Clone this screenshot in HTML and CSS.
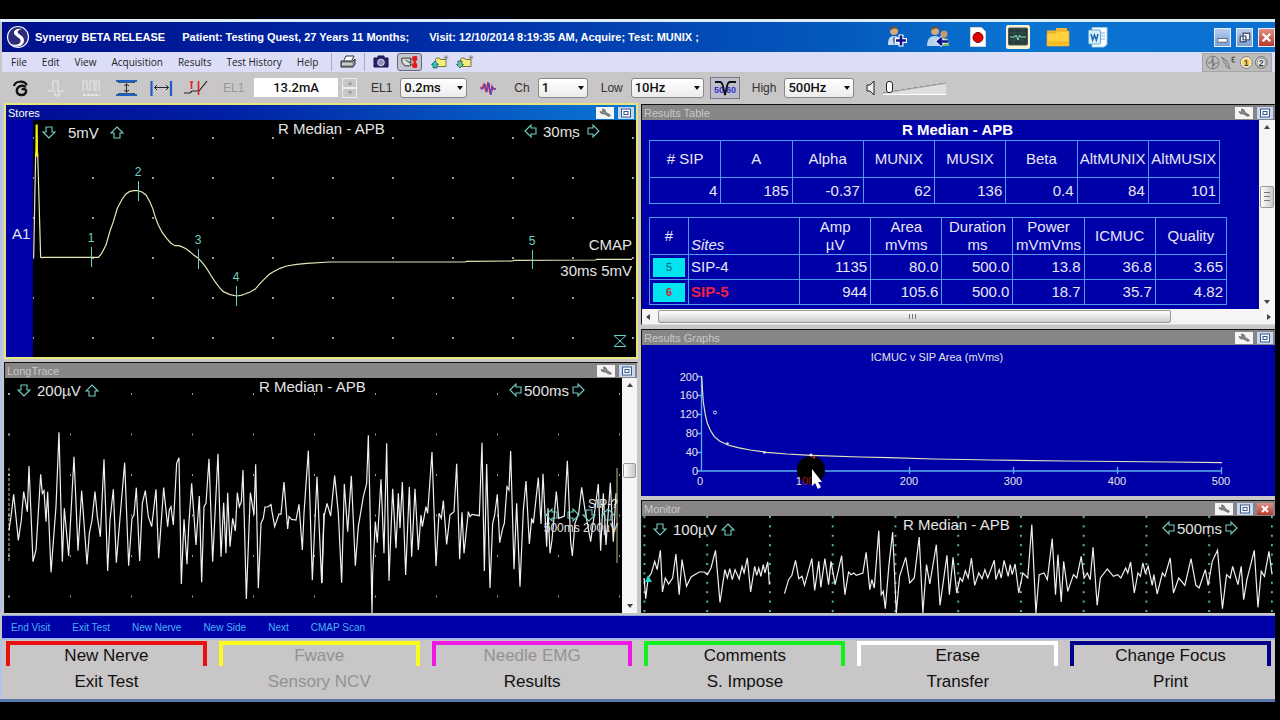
FILE: index.html
```html
<!DOCTYPE html>
<html lang="en">
<head>
<meta charset="utf-8">
<title>Synergy BETA RELEASE</title>
<link rel="stylesheet" href="styles.css">
</head>
<body>
<svg class="defs" aria-hidden="true">
  <defs>
    <symbol id="arrow" viewBox="-8 -8 16 16"><path d="M0-6 6 0H3V5H-3V0H-6Z" fill="none" stroke="#74cdc4" stroke-width="1.1"/></symbol>
    <symbol id="wrench" viewBox="0 0 18 12"><path d="M4 4.500a3 3 0 0 0 4 2.300l5 2.700 1.500-1.200L9.800 5.200A3 3 0 0 0 6.500 2l.5 2.200-1.400.8Z" fill="#888" stroke="#555" stroke-width=".7"/></symbol>
    <symbol id="maximize" viewBox="0 0 16 12"><rect x="3.500" y="2" width="9" height="8" fill="#f4f8ff" stroke="#3f5688"/><rect x="6" y="4.500" width="4" height="3" fill="#fff" stroke="#3f5688"/></symbol>
    <symbol id="folder" viewBox="0 0 18 14"><path d="M4.500 11.500V4.500l1-1.500h3l1 1.500h5.500v7Z" fill="#f4ef7c" stroke="#77733c"/><path d="M15 0v5M12.500 2.500h5M13.300.8l3.500 3.500M16.800.8l-3.500 3.500" stroke="#777" stroke-width=".6"/></symbol>
  </defs>
</svg>

<main class="app">
  <header class="titlebar">
    <svg class="logo" viewBox="0 0 24 24"><circle cx="12" cy="12" r="10.500" fill="#2b2d78" stroke="#eef" stroke-width="1.200"/><path d="M16 4C10 2.500 6 6.500 9 10c2 2.500 6 3 5.500 6.500-.4 3-5 4.500-10.500 2 5 5 13.500 3.500 14-2.500.3-4-3-5.500-5-7C10.500 7 12 4.500 16 4Z" fill="#fff"/></svg>
    <h1>Synergy BETA RELEASE</h1>
    <span class="patient">Patient: Testing Quest, 27 Years 11 Months;</span>
    <span class="visit">Visit: 12/10/2014 8:19:35 AM, Acquire; Test: MUNIX ;</span>
    <nav class="launch">
      <button aria-label="Add patient"><svg viewBox="0 0 24 24"><circle cx="8" cy="6" r="4" fill="#d8a97c"/><path d="M4 6c-1-6 9-6 8-1-2-2-5-2-8 1Z" fill="#70513a"/><path d="M2 20c0-7 2-9 6-9s7 2 7 9Z" fill="#c9dcee"/><path d="m8 11 2 3-2 6-1.500-6Z" fill="#5d83b5"/><path d="M15 9.500v12M9 15.500h12" stroke="#fff" stroke-width="5"/><path d="M15 10.500v10M10 15.500h10" stroke="#10108c" stroke-width="2.600"/></svg></button>
      <button aria-label="Patient list"><svg viewBox="0 0 24 24"><circle cx="18" cy="9" r="3.500" fill="#c9966d"/><path d="M13 21c0-6 2-8 5-8s5 2 5 8Z" fill="#7dbb66"/><circle cx="9" cy="6" r="4" fill="#d8a97c"/><path d="M5 6c-1-6 9-6 8-1-2-2-5-2-8 1Z" fill="#70513a"/><path d="M1 21c0-7 3-10 8-10s6 3 6 10Z" fill="#b5d2ee"/><path d="M22 16.500H12m4.500-4-4.500 4 4.500 4" fill="none" stroke="#fff" stroke-width="4"/><path d="M22 16.500H12m4-3.500-4 3.500 4 3.500" fill="none" stroke="#10108c" stroke-width="2.400"/></svg></button>
      <button aria-label="Record"><svg viewBox="0 0 24 24"><path d="M4.500 2.500h11l4 4v15h-15Z" fill="#fff" stroke="#d5d5d5"/><circle cx="12" cy="12.500" r="5" fill="#e00000" stroke="#700"/></svg></button>
      <button aria-label="Acquire"><svg viewBox="0 0 24 24"><rect x="0" y="0" width="24" height="24" rx="2" fill="#f7f2cf"/><rect x="2.500" y="3" width="19" height="17" rx="1" fill="#233e3a" stroke="#555"/><path d="M4 8h16M4 15h16M8 4v15M16 4v15" stroke="#3d625b" stroke-width=".6"/><path d="M4 12h5l1-2 2 5 1.500-5 1 2H20" fill="none" stroke="#8fe0c5"/></svg></button>
      <button aria-label="Open folder"><svg viewBox="0 0 24 24"><path d="M1 9V5.500h9V3h11v6Z" fill="#f3b52d"/><path d="M1 21V8h9l2-2h11v15Z" fill="#ffd13c" stroke="#e7a51c" stroke-width=".7"/><path d="M2 18h20" stroke="#f6b520" stroke-width="3"/></svg></button>
      <button aria-label="Word report"><svg viewBox="0 0 24 24"><path d="M6 2.500h15v17L18 22H6Z" fill="#fff" stroke="#9cc6e6"/><path d="M15 8h4M15 11h4M15 14h4" stroke="#7eb0dc"/><rect x="2.500" y="5" width="12" height="14" rx="1" fill="#d9f0fb" stroke="#5dacdc"/><path d="m5 9 1.700 6L8.500 10l1.800 5L12 9" fill="none" stroke="#2268b5" stroke-width="1.600"/></svg></button>
    </nav>
    <div class="window-buttons">
      <button aria-label="Minimize"><svg viewBox="0 0 16 18"><rect x="3" y="10" width="10" height="4" fill="#fff" stroke="#567"/></svg></button>
      <button aria-label="Restore"><svg viewBox="0 0 16 18"><path d="M6.500 4.500h7v7h-7ZM3.500 7.500h6v6h-6Z" fill="#fff" stroke="#4a5a78" stroke-width="1.500"/></svg></button>
      <button class="close" aria-label="Close"><svg viewBox="0 0 16 18"><path d="m4 5 8 8m0-8-8 8" stroke="#fff" stroke-width="2.500"/></svg></button>
    </div>
  </header>

  <div class="menubar">
    <nav class="menus"><button>File</button><button>Edit</button><button>View</button><button>Acquisition</button><button>Results</button><button>Test History</button><button>Help</button></nav>
    <div class="menu-tools">
      <button class="ruled" aria-label="Print"><svg viewBox="0 0 18 14"><path d="M5 5 7 1h8l-2 4" fill="#fff" stroke="#333"/><path d="M2 6h12l2-2v5l-2 3H2Z" fill="#999" stroke="#222"/><path d="M3 9h10" stroke="#fff"/></svg></button>
      <button class="ruled" aria-label="Camera"><svg viewBox="0 0 18 14"><path d="M2 3h4V1h6v2h4v9H2Z" fill="#2c236c" stroke="#151045"/><circle cx="9" cy="7.500" r="3.300" fill="#8f8bc4" stroke="#ddd"/></svg></button>
      <button class="pressed" aria-label="Video"><svg viewBox="0 0 24 14"><path d="M4 3h9v8H7l-3-4ZM8 5l5 3" fill="#ddd" stroke="#333"/><path d="M13 5 18 1v12l-5-4Z" fill="#aaa" stroke="#555"/><path d="M15 1h5v4l-2 2 2 2v4h-5V9l2-2-2-2Z" fill="#f01414"/></svg></button>
      <button aria-label="Upload"><svg viewBox="0 0 18 14"><use href="#folder"/><path d="m4 6 3.500 3.500H6V13H2V9.500H.5Z" fill="#28cabb" stroke="#174848" stroke-width=".7"/></svg></button>
      <button aria-label="Download"><svg viewBox="0 0 18 14"><use href="#folder"/><path d="m4 13 3.500-3.500H6V6H2v3.500H.5Z" fill="#68c8a0" stroke="#174848" stroke-width=".7"/></svg></button>
    </div>
    <div class="tray">
      <svg viewBox="0 0 70 17"><g fill="none" stroke="#777"><circle cx="10" cy="8.500" r="6.500"/><path d="M5 9h3l2-5 1 8 2-3h3M10 2v13"/><path d="m19 3 6 4-1 1.500 3 2L26 12l2 3-5-3 1-1.500-3-2L22 7Z"/></g><path d="M33 3h-3v5h3M30 5.500h2" stroke="#444" fill="none"/><circle cx="44.500" cy="8.500" r="6" fill="#fff" stroke="#777"/><circle cx="44.500" cy="8.500" r="4.500" fill="#ffd257"/><circle cx="60" cy="8.500" r="6" fill="#ddd" stroke="#666"/><circle cx="60" cy="8.500" r="4.200" fill="#eee" stroke="#888"/><g class="tray-num"><text x="44.500" y="12">1</text><text x="60" y="12">2</text></g></svg>
    </div>
  </div>

  <div class="toolbar">
    <div class="tool-icons">
      <button aria-label="Stimulate"><svg viewBox="0 0 24 20"><path d="M5 8c1-5 10-6 13-1" fill="none" stroke="#111" stroke-width="2.200"/><path d="M17 9c-5-3-10 0-9 5 1 4 8 4 9 0 .6-3-3-4-4-2" fill="none" stroke="#111" stroke-width="2.400"/></svg></button>
      <button aria-label="Single pulse"><svg viewBox="0 0 24 20"><path d="M4 13h5V3h5v10h6M11 13v5h4v-5" fill="none" stroke="#e8e8e8" stroke-width="1.200"/></svg></button>
      <button aria-label="Pulse train"><svg viewBox="0 0 24 20"><path d="M4 13V3h4v9h3V3h4v9h2V3h3v10" fill="none" stroke="#e6e6e6" stroke-width="1.200"/><path d="M4 17h17" stroke="#e8e8e8" stroke-width="2" stroke-dasharray="3 1"/></svg></button>
      <button aria-label="Gain"><svg viewBox="0 0 24 20"><path d="M2 3h21M2 17h21" stroke="#1b5fc4" stroke-width="2.200"/><path d="M4 4.500h17M4 15.500h17" stroke="#124" stroke-width=".7"/><path d="M12.500 6v8m-2.500-6 2.500-2 2.500 2m-5 4 2.500 2 2.500-2" fill="none" stroke="#222"/></svg></button>
      <button aria-label="Sweep"><svg viewBox="0 0 24 20"><path d="M2.500 3v15M22 3v15" stroke="#1b5fc4" stroke-width="2.200"/><path d="M5.500 9.500h14M8 7 5.500 9.500 8 12m9-5 2.500 2.500L17 12" fill="none" stroke="#222"/></svg></button>
      <button aria-label="Trigger"><svg viewBox="0 0 24 20"><path d="M0 15h6l2-2h7l8-10" fill="none" stroke="#222" stroke-width="1.200"/><path d="M7.500 4v7M14.500 3v14M6 4h3" stroke="#e02020" stroke-width="1.600"/></svg></button>
    </div>
    <label class="dim" for="current">EL1</label>
    <input id="current" class="current" type="text" value="13.2mA">
    <div class="spinner"><button aria-label="Increase">▴</button><button aria-label="Decrease">▾</button></div>
    <label class="field">EL1 <span class="drop w-ms"><select><option>0.2ms</option></select></span></label>
    <button class="wave" aria-label="Waveform"><svg viewBox="0 0 18 16"><path d="M1 8h2l2-4 2 8 2-10 2 12 2-8 1 3h3" fill="none" stroke="#d21f4a" stroke-width="1.300"/><path d="M2 9h2l2-5 2 8 2-9 2 12 2-8 1 2h2" fill="none" stroke="#4848ca"/></svg></button>
    <label class="field">Ch <span class="drop w-ch"><select><option>1</option></select></span></label>
    <label class="field">Low <span class="drop w-low"><select><option>10Hz</option></select></span></label>
    <button class="notch" aria-label="Notch filter"><svg viewBox="0 0 28 20"><text x="3" y="15">50</text><text x="15" y="15">60</text><path d="M4 4h5q2 0 3 4l2 9 2-9q1-4 3-4h6" fill="none" stroke="#111" stroke-width="1.800"/></svg></button>
    <label class="field">High <span class="drop w-high"><select><option>500Hz</option></select></span></label>
    <svg class="speaker" viewBox="0 0 12 16"><path d="M2 5h3l4-4v14l-4-4H2Z" fill="#eee" stroke="#222"/></svg>
    <input class="volume" type="range" min="0" max="100" value="4" aria-label="Volume">
  </div>

  <div class="workspace">
    <div class="column">
      <section class="panel active">
        <header><h2>Stores</h2><button aria-label="Settings"><svg><use href="#wrench"/></svg></button><button class="max" aria-label="Maximize"><svg><use href="#maximize"/></svg></button></header>
        <svg class="plot" viewBox="6 120 630 237">
          <defs><pattern id="dots-a" x="32" y="137" width="60" height="40" patternUnits="userSpaceOnUse"><rect width="2" height="2" fill="#8fa09c"/></pattern></defs>
          <rect x="33" y="120" width="603" height="237" fill="url(#dots-a)"/>
          <rect x="6" y="120" width="27" height="237" fill="#0000a8"/>
          <g transform="translate(0 100) scale(.33333)" class="trace cream">
            <polyline points="122,473 132,472 295,472 305,460 318,435 330,393 340,365 352,325 368,295 378,282 388,275 400,272 414,272 426,276 438,285 448,302 458,325 466,352 475,375 487,398 500,415 512,429 525,437 535,437 545,440 558,446 570,455 582,466 593,473 607,488 620,505 632,525 645,545 658,562 670,575 690,584 710,588 723,586 735,582 750,576 765,568 780,551 795,535 808,523 820,515 840,505 860,498 890,493 920,490 990,486 1395,486 1400,484 1538,483 1541,481 1787,480 1790,478 1896,478"/>
            <polyline points="101,473 107,160 113,160 122,473"/>
            <polyline class="spike" points="108,170 109,76 111,76 112,170"/>
          </g>
          <path d="M91.500 247v20M138.500 181v20M198.500 249v20M236.500 286v20M532.500 250v19" stroke="#5fd3c5"/>
          <g class="marks"><text x="91" y="242">1</text><text x="138" y="176">2</text><text x="198" y="244">3</text><text x="236" y="281">4</text><text x="532" y="245">5</text></g>
          <use href="#arrow" x="-8" y="-8" width="16" height="16" transform="translate(49 132) rotate(180)"/>
          <use href="#arrow" x="109" y="125" width="16" height="16"/>
          <use href="#arrow" x="-8" y="-8" width="16" height="16" transform="translate(531 131) rotate(270)"/>
          <use href="#arrow" x="-8" y="-8" width="16" height="16" transform="translate(593 131) rotate(90)"/>
          <path d="M614 335.500h12l-12 11h12Z" fill="none" stroke="#5fd3c5"/>
          <text x="12" y="239">A1</text><text x="68" y="138">5mV</text><text x="278" y="134">R Median - APB</text><text x="543" y="137">30ms</text>
          <g text-anchor="end"><text x="632" y="250">CMAP</text><text x="632" y="276">30ms 5mV</text></g>
        </svg>
      </section>

      <section class="panel">
        <header><h2>LongTrace</h2><button aria-label="Settings"><svg><use href="#wrench"/></svg></button><button class="max" aria-label="Maximize"><svg><use href="#maximize"/></svg></button></header>
        <div class="scroll-row">
          <svg class="plot" viewBox="5 378 617 235">
            <defs><pattern id="dots-b" x="8" y="393" width="61" height="40.500" patternUnits="userSpaceOnUse"><rect width="2" height="2" fill="#8aa8a2"/></pattern></defs>
            <rect x="5" y="378" width="617" height="235" fill="url(#dots-b)"/>
            <path d="M9 468v94" stroke="#b9c0a0" stroke-dasharray="3 2"/><path d="M617 468v95" stroke="#b9b98a"/>
            <g class="trace" transform="translate(0 360) scale(.33333)">
              <polyline points="27,510 33,470 41,403 55,541 64,480 71,395 82,455 87,318 99,605 108,570 122,343 127,400 132,392 138,485 143,395 153,637 168,440 177,217 187,605 193,445 206,588 222,290 234,572 245,392 261,613 268,520 276,480 285,395 292,470 301,530 312,298 323,633 330,480 340,388 349,608 362,450 374,308 386,617 396,475 402,465 409,383 419,603 427,430 436,392 445,470 455,500 468,388 476,595 491,383 503,500 508,450 513,440 520,495 530,310 537,293 544,672 552,478 561,613 566,500 575,370 588,555 598,408 605,667 612,440 618,430 627,296 638,605 654,281 663,590 671,428 678,580 683,398 690,560 698,475 706,513 712,398 718,440 724,425 729,330 739,717 751,398 762,465 767,313 775,685 783,490 790,475 795,441 803,441 813,434 816,455 824,500 837,462 843,463 852,366 863,507 867,470 875,478 888,480 897,433 907,570 912,460 925,272 937,661 951,350 965,670 972,460"/>
              <polyline transform="translate(960)" points="12,460 6,668 12,470 21,430 32,468 44,347 55,460 65,668 73,372 83,515 94,347 106,617 115,500 130,410 140,370 145,226 150,440 156,759 158,640 166,485 172,548 183,358 192,580 200,250 207,662 218,386 228,565 235,400 240,505 247,366 257,645 268,380 275,590 285,386 295,570 303,465 307,500 318,440 323,460 336,276 348,618 357,460 364,475 370,422 380,553 390,465 402,455 410,311 419,598 426,457 432,580 445,455 450,470 456,463 478,467 486,248 493,633 500,312 510,684 518,490 524,465 532,403 539,548 548,505 553,490 561,380 567,390 572,273 582,628 590,430 600,680 610,450 618,363 628,552 635,475 640,490 655,353 663,492 669,341 680,560 684,445 690,580 696,540 709,395 716,475 733,468 742,302 752,545 757,588 765,490 776,460 785,382 795,450 812,545 835,372 842,572 850,400 858,555 871,368 880,545 888,400"/>
            </g>
            <use href="#arrow" x="-8" y="-8" width="16" height="16" transform="translate(24 390) rotate(180)"/>
            <use href="#arrow" x="84" y="383" width="16" height="16"/>
            <use href="#arrow" x="-8" y="-8" width="16" height="16" transform="translate(516 390) rotate(270)"/>
            <use href="#arrow" x="-8" y="-8" width="16" height="16" transform="translate(578 390) rotate(90)"/>
            <use href="#arrow" x="-8" y="-8" width="16" height="16" transform="translate(552 515) rotate(270)"/>
            <use href="#arrow" x="-8" y="-8" width="16" height="16" transform="translate(573 515) rotate(90)"/>
            <use href="#arrow" x="-8" y="-8" width="16" height="16" transform="translate(589 515) rotate(180)"/>
            <use href="#arrow" x="600" y="507" width="16" height="16"/>
            <text x="37" y="396">200µV</text><text x="259" y="392">R Median - APB</text><text x="524" y="396">500ms</text>
            <g class="overlay" text-anchor="end"><text x="618" y="508">SIP-?</text><text x="618" y="532">500ms 200µV</text></g>
          </svg>
          <div class="vscroll"><i class="up"></i><b class="thumb-long"></b><i class="down"></i></div>
        </div>
      </section>
    </div>

    <div class="column right">
      <section class="panel">
        <header><h2>Results Table</h2><button aria-label="Settings"><svg><use href="#wrench"/></svg></button><button class="max" aria-label="Maximize"><svg><use href="#maximize"/></svg></button></header>
        <div class="scroll-row">
          <div class="results">
            <h3>R Median - APB</h3>
            <table class="summary">
              <thead><tr><th># SIP</th><th>A</th><th>Alpha</th><th>MUNIX</th><th>MUSIX</th><th>Beta</th><th>AltMUNIX</th><th>AltMUSIX</th></tr></thead>
              <tbody><tr><td>4</td><td>185</td><td>-0.37</td><td>62</td><td>136</td><td>0.4</td><td>84</td><td>101</td></tr></tbody>
            </table>
            <table class="sites">
              <thead><tr><th class="num">#</th><th class="site">Sites</th><th>Amp<br>µV</th><th>Area<br>mVms</th><th>Duration<br>ms</th><th>Power<br>mVmVms</th><th>ICMUC</th><th>Quality</th></tr></thead>
              <tbody>
                <tr><td class="num"><span>5</span></td><td class="site">SIP-4</td><td>1135</td><td>80.0</td><td>500.0</td><td>13.8</td><td>36.8</td><td>3.65</td></tr>
                <tr class="current-site"><td class="num"><span>6</span></td><td class="site">SIP-5</td><td>944</td><td>105.6</td><td>500.0</td><td>18.7</td><td>35.7</td><td>4.82</td></tr>
              </tbody>
            </table>
          </div>
          <div class="vscroll"><i class="up"></i><b class="thumb-results"></b><i class="down"></i></div>
        </div>
        <div class="hscroll"><i class="left"></i><b></b><i class="right-arrow"></i></div>
      </section>

      <section class="panel">
        <header><h2>Results Graphs</h2><button aria-label="Settings"><svg><use href="#wrench"/></svg></button><button class="max" aria-label="Maximize"><svg><use href="#maximize"/></svg></button></header>
        <svg class="plot graph" viewBox="642 345 633 151">
          <path d="M701.500 376v95H1222M697 376.500h5M697 395.500h5M697 414.500h5M697 433.500h5M697 452.500h5M697 471h5M805.500 467v7M909.500 467v7M1013.500 467v7M1117.500 467v7M1221.500 467v7" fill="none" stroke="#58aef0" stroke-width="1.300"/>
          <g class="trace cream" transform="translate(640 330) scale(.40816 .33333)"><polyline points="151,138 153,180 155,215 160,255 165,280 172,300 182,320 195,333 215,345 240,353 270,360 310,367 360,372 420,376 540,381 610,383 720,387 860,390 1040,393 1300,396 1426,398"/></g>
          <circle cx="715" cy="412.500" r="1.500" fill="none" stroke="#dde"/><circle cx="727.500" cy="443.500" r="1.300" fill="#dde"/><circle cx="764.500" cy="452.500" r="1.300" fill="#dde"/>
          <g text-anchor="end"><text x="698" y="381">200</text><text x="698" y="399">160</text><text x="698" y="418">120</text><text x="698" y="437">80</text><text x="698" y="456">40</text><text x="698" y="475">0</text></g>
          <ellipse cx="811" cy="470" rx="14" ry="14" fill="#000"/>
          <g text-anchor="middle"><text x="937" y="361">ICMUC v SIP Area (mVms)</text><text x="700" y="485">0</text><text x="805" y="485">1<tspan fill="#9c1a20">00</tspan></text><text x="909" y="485">200</text><text x="1013" y="485">300</text><text x="1117" y="485">400</text><text x="1221" y="485">500</text></g>
          <circle cx="811" cy="455" r="1.500" fill="#eee"/><circle cx="814" cy="457" r="1.500" fill="#a33"/>
          <path d="M812 469v17l3-3 3 6 3-2-3-5h4Z" fill="#fff"/>
        </svg>
      </section>

      <section class="panel">
        <header><h2>Monitor</h2><button aria-label="Settings"><svg><use href="#wrench"/></svg></button><button class="max" aria-label="Maximize"><svg><use href="#maximize"/></svg></button><button class="close" aria-label="Close"><svg viewBox="0 0 16 12"><path d="m5 3 6 6m0-6-6 6" stroke="#fff" stroke-width="2"/></svg></button></header>
        <svg class="plot" viewBox="642 516 633 97">
          <defs><pattern id="dots-c" x="643.500" y="516" width="62.750" height="9.400" patternUnits="userSpaceOnUse"><rect width="1.800" height="2" fill="#62c4b6"/></pattern></defs>
          <rect x="642" y="516" width="633" height="97" fill="url(#dots-c)"/>
          <g class="trace" transform="translate(640 498) scale(.40816 .33333)">
            <polyline points="10,240 14,302 20,240 28,225 36,190 42,215 50,157 55,282 62,240 70,258 80,240 88,168 96,290 103,185 114,265 125,237 145,222 158,222 165,230 174,210 185,157 196,313 208,215 214,240 220,212 226,245 233,215 243,243 250,205 255,225 263,180 271,282 281,205 286,232 291,210 296,235 302,200 306,225 313,192 317,260"/>
            <polyline points="354,287 364,245 372,232 381,187 389,242 397,235 403,262 421,182 428,277 438,190 443,268 453,182 462,260 468,190 478,260 494,173 502,290 511,222 517,230 524,225 530,232 546,225 554,163 563,275 568,245 574,270 585,98 591,290 596,280 601,332 610,200 619,102 628,345 636,235 651,178 661,255 672,240 684,117 693,345 702,200 710,258 726,140 735,322 752,172 758,290 767,178 776,285 784,240 790,250 797,218 804,240 812,180 820,262 830,225 838,242 845,215 852,240 868,187 872,245 880,215 885,240 892,187 902,235 907,200 912,230 919,198 928,285 938,225 950,240 960,80 970,345 978,230 990,225 998,245 1010,122 1018,290 1024,170 1032,312 1038,190 1048,280 1062,230 1070,240 1081,175 1088,240 1096,225 1103,245 1110,148 1120,322 1128,240 1145,213 1160,235 1170,230 1178,240 1190,210 1195,225 1202,192 1211,285 1220,225 1226,235 1232,195 1238,225 1245,205 1255,262 1259,230 1267,288 1280,225 1286,235 1299,180 1307,285 1320,240 1335,262 1350,182 1362,262 1370,270 1385,215 1392,262 1402,190 1415,157 1427,332 1437,230 1446,240 1452,205 1465,260 1473,205 1479,305 1487,245 1505,157 1514,328 1522,220 1530,235 1541,160 1548,225"/>
          </g>
          <path d="m648 575 4 7h-7Z" fill="#20d8d0"/>
          <use href="#arrow" x="-8" y="-8" width="16" height="16" transform="translate(660 529) rotate(180)"/>
          <use href="#arrow" x="720" y="522" width="16" height="16"/>
          <use href="#arrow" x="-8" y="-8" width="16" height="16" transform="translate(1169 528) rotate(270)"/>
          <use href="#arrow" x="-8" y="-8" width="16" height="16" transform="translate(1231 528) rotate(90)"/>
          <text x="673" y="535">100µV</text><text x="903" y="530">R Median - APB</text><text x="1177" y="534">500ms</text>
        </svg>
      </section>
    </div>
  </div>

  <nav class="actions"><button>End Visit</button><button>Exit Test</button><button>New Nerve</button><button>New Side</button><button>Next</button><button>CMAP Scan</button></nav>

  <footer class="softkeys">
    <div><button class="key red">New Nerve</button><button>Exit Test</button></div>
    <div><button class="key yellow" disabled>Fwave</button><button disabled>Sensory NCV</button></div>
    <div><button class="key magenta" disabled>Needle EMG</button><button>Results</button></div>
    <div><button class="key green">Comments</button><button>S. Impose</button></div>
    <div><button class="key white">Erase</button><button>Transfer</button></div>
    <div><button class="key navy">Change Focus</button><button>Print</button></div>
  </footer>
</main>
</body>
</html>
```
FILE: styles.css
```css
* { box-sizing: border-box; }
body {
  margin: 0;
  padding: 19px 5px 18px 0;
  background: #000;
  font-family: "Liberation Sans", Arial, sans-serif;
}
button {
  margin: 0;
  padding: 0;
  border: 0;
  background: none;
  color: inherit;
  font: inherit;
}
svg { display: block; }
h1, h2, h3 { margin: 0; }
.defs { position: absolute; width: 0; height: 0; }

.app {
  background: #c8c6c6;
  border-top: 3px solid #dcecf8;
  border-bottom: 3px solid #5878a8;
}

/* Title bar */
.titlebar {
  display: flex;
  align-items: center;
  height: 30px;
  margin-left: 2px;
  padding-left: 4px;
  background: linear-gradient(90deg, #00108c, #0028a4 30%, #0458bc 65%, #0a74d2 80%, #0a70d0);
  color: #fff;
  font-size: 11px;
  font-weight: bold;
  white-space: nowrap;
}
.titlebar h1 { font-size: inherit; }
.logo { width: 24px; height: 24px; margin-right: 5px; }
.patient { margin-left: 17px; }
.visit { margin-left: 20px; }
.launch { display: flex; gap: 16px; margin-left: auto; }
.launch svg { width: 24px; height: 24px; }
.window-buttons { display: flex; gap: 5px; margin-left: 104px; }
.window-buttons button {
  width: 17px;
  border: 1px solid #e4eefc;
  background: linear-gradient(#b8cff0, #7f9fd0);
}
.window-buttons svg { width: 15px; height: 17px; }
.window-buttons .close, .panel .close { background: linear-gradient(#e09088, #b83a30); }

/* Menu bar */
.menubar {
  display: flex;
  align-items: center;
  height: 20px;
  margin-left: 2px;
  background: #dcdef8;
  color: #222;
  font: 10px "Open Sans", "Noto Sans", sans-serif;
}
.menus { display: flex; gap: 15px; padding-left: 9px; white-space: nowrap; }
.menu-tools { display: flex; align-items: center; gap: 7px; margin-left: 13px; }
.menu-tools button { height: 18px; display: flex; align-items: center; }
.menu-tools svg { width: 18px; height: 14px; }
.menu-tools .ruled { padding-left: 7px; border-left: 1px solid #aab; }
.menu-tools .pressed {
  justify-content: center;
  width: 25px;
  margin-right: 2px;
  border: 1px solid #667;
  border-radius: 3px;
  background: #c4c4d0;
}
.menu-tools .pressed svg { width: 23px; }
.tray { margin-left: auto; margin-right: 3px; background: #bdbbbb; border: 1px solid #a5a5a8; }
.tray svg { width: 68px; height: 17px; }
.tray-num { font: bold 9px "Liberation Sans", sans-serif; text-anchor: middle; fill: #444; }

/* Toolbar */
.toolbar {
  display: flex;
  align-items: center;
  height: 31px;
  padding-left: 9px;
  color: #333;
  font: 12px "Liberation Sans", Arial, sans-serif;
}
.tool-icons { display: flex; gap: 11px; margin-right: 15px; }
.tool-icons svg { width: 24px; height: 20px; }
.dim { width: 31px; color: #999; }
.current {
  width: 84px;
  height: 19px;
  border: 0;
  background: #fff;
  color: #111;
  text-align: center;
  font: 500 13px Roboto, sans-serif;
}
.spinner { display: flex; flex-direction: column; margin: 0 14px 0 4px; }
.spinner button {
  width: 15px;
  height: 10px;
  border: 1px solid #eee;
  color: #999;
  font-size: 8px;
  line-height: 8px;
}
.field { display: flex; align-items: center; gap: 8px; }
.drop { position: relative; display: block; }
.drop::after {
  content: "";
  position: absolute;
  right: 4px;
  top: 8px;
  border: 3px solid transparent;
  border-top: 4px solid #111;
}
.drop select {
  appearance: none;
  width: 100%;
  height: 20px;
  padding: 0 0 0 3px;
  border: 1px solid #888;
  border-radius: 3px;
  background: linear-gradient(#fff, #ececec);
  color: #111;
  font: 500 13px Roboto, sans-serif;
}
.w-ms { width: 67px; }
.w-ch { width: 50px; }
.w-low { width: 73px; }
.w-high { width: 70px; }
.wave { margin: 0 17px 0 12px; }
.wave svg { width: 18px; height: 16px; }
.toolbar .field + .field { margin-left: 13px; }
.notch { margin: 0 12px 0 6px; border: 1px solid #778; background: #bdbdcb; }
.notch svg { width: 28px; height: 20px; }
.notch text { font: bold 9px "Liberation Sans", sans-serif; fill: #3434c8; }
.speaker { width: 12px; height: 16px; margin: 0 6px 0 11px; }
.volume {
  appearance: none;
  width: 63px;
  height: 14px;
  margin: 0;
  background: linear-gradient(171deg, transparent 49%, #888 50%, #dedede 58%);
  border-bottom: 1px solid #fff;
}
.volume::-webkit-slider-thumb {
  appearance: none;
  width: 7px;
  height: 12px;
  border: 1px solid #222;
  border-radius: 3px;
  background: #fff;
}

/* Panels */
.workspace {
  display: grid;
  grid-template-columns: 1fr 1fr;
  gap: 3px;
  padding-left: 2px;
  border-left: 2px solid #b4c4e8;
}
.column { display: flex; flex-direction: column; gap: 3px; min-width: 0; }
.column.right { gap: 4px; padding-top: 1px; }
.panel { border: 1px solid #111; border-bottom: 0; border-right-color: #c8c6c6; }
.panel.active { border: 2px solid #e6e67c; }
.right .panel { border-right: 0; }
.right .panel:first-child { border-bottom: 1px solid #ddd; }
.panel header {
  display: flex;
  align-items: center;
  gap: 4px;
  height: 15px;
  padding-right: 2px;
  background: #878586;
  color: #c9c9c9;
}
.panel.active header { background: linear-gradient(90deg, #000c94, #0020a4 35%, #0a78d4); color: #fff; }
.panel h2 { flex: 1; padding-left: 2px; font-size: 11px; font-weight: normal; }
.panel header button { background: #f4f4f4; }
.panel header .max { background: #c6d8f4; }
.panel header svg { width: 18px; height: 12px; }
.panel header .max svg, .panel header .close svg { width: 16px; height: 12px; }
.plot { width: 100%; height: auto; background: #000; }
.plot text { font-size: 15px; fill: #e4e4e4; }
.plot.graph { background: #0000a8; }
.plot.graph text { font-size: 11px; }
.plot .marks text { font-size: 12px; fill: #6fd0c0; text-anchor: middle; }
.plot .overlay text { font-size: 12px; }
.plot.graph tspan { fill: #9c1a20; }
.trace polyline { fill: none; stroke: #f0f0f0; stroke-width: 1.2; vector-effect: non-scaling-stroke; }
.trace.cream polyline { stroke: #e6e6b8; }
.trace.cream .spike { stroke: #f0f020; stroke-width: 1.5; }

/* Scrollbars */
.scroll-row { display: flex; }
.scroll-row > :first-child { flex: 1; min-width: 0; }
.vscroll {
  position: relative;
  width: 15px;
  flex: none;
  display: flex;
  flex-direction: column;
  align-items: center;
  justify-content: space-between;
  padding: 5px 0;
  background: #f6f4f6;
}
.right .vscroll { width: 16px; }
.vscroll i, .hscroll i { border: 3px solid transparent; }
.vscroll .up { border-top: 0; border-bottom: 4px solid #444; }
.vscroll .down { border-bottom: 0; border-top: 4px solid #444; }
.vscroll b, .hscroll b { border: 1px solid #999; border-radius: 2px; background: linear-gradient(90deg, #fff, #c6c6cc); }
.vscroll b { position: absolute; left: 1px; right: 1px; }
.thumb-long { top: 36%; height: 15px; }
.thumb-results {
  top: 35%;
  height: 22px;
}
.thumb-results::after {
  content: "";
  position: absolute;
  inset: 5px 3px;
  background: repeating-linear-gradient(#777 0 1px, transparent 1px 4px);
}
.hscroll { display: flex; align-items: center; height: 15px; padding: 0 4px; background: #f6f4f6; }
.hscroll .left { border-left: 0; border-right: 4px solid #444; }
.hscroll .right-arrow { border-right: 0; border-left: 4px solid #444; margin-left: auto; }
.hscroll b { position: relative; flex: 0 1 82%; height: 13px; margin-left: 8px; background: linear-gradient(#fff, #ccc); }
.hscroll b::after {
  content: "";
  position: absolute;
  left: 49%;
  top: 3px;
  width: 8px;
  height: 5px;
  background: repeating-linear-gradient(90deg, #777 0 1px, transparent 1px 3px);
}

/* Results tables */
.results { height: 189px; padding: 0 7px; background: #0000a8; color: #e8e8f4; font-size: 15px; }
.results h3 { height: 20px; padding-left: 14px; color: #fff; font-size: 15px; line-height: 20px; text-align: center; }
.results table { border-collapse: collapse; table-layout: fixed; line-height: 18px; }
.results th, .results td { padding: 0 3px; border: 1px solid #4c9cf0; }
.results th { padding: 0; height: 37px; font-weight: normal; }
.results td { height: 26px; text-align: right; }
.summary { width: 571px; }
.sites { width: 578px; margin-top: 13px; }
.results .sites td { height: 25px; }
.results .num { width: 39px; padding: 0 3px; text-align: center; }
.num span { display: block; height: 19px; background: #00e4f0; color: #1c5080; font-size: 11px; line-height: 19px; }
.results .site { width: 111px; padding-left: 2px; text-align: left; }
.results th.site { font-style: italic; vertical-align: bottom; }
.current-site .site { color: #f02040; font-weight: bold; }
.current-site .num span { color: #d02030; font-weight: bold; }

/* Bottom bars */
.actions {
  display: flex;
  align-items: center;
  gap: 22px;
  height: 25px;
  margin: 2px 0 0 2px;
  padding-left: 9px;
  border-top: 1px solid #8ea6dc;
  border-bottom: 2px solid #a8b8e4;
  background: #0000a8;
  color: #46b4f4;
  font-size: 10px;
}
.softkeys {
  display: grid;
  grid-template-columns: repeat(6, 1fr);
  gap: 12px;
  padding: 1px 4px 1px;
  border-left: 2px solid #b4c4e8;
  color: #111;
  font-size: 17px;
}
.softkeys button { display: block; width: 100%; height: 32px; line-height: 32px; }
.softkeys button:disabled { color: #929292; }
.softkeys .key { height: 25px; line-height: 22px; border: 4px solid; border-bottom: 0; }
.softkeys .red { border-color: #e81010; }
.softkeys .yellow { border-color: #fafa20; }
.softkeys .magenta { border-color: #ee18e4; }
.softkeys .green { border-color: #10f020; }
.softkeys .white { border-color: #fff; }
.softkeys .navy { border-color: #00008c; }
```
